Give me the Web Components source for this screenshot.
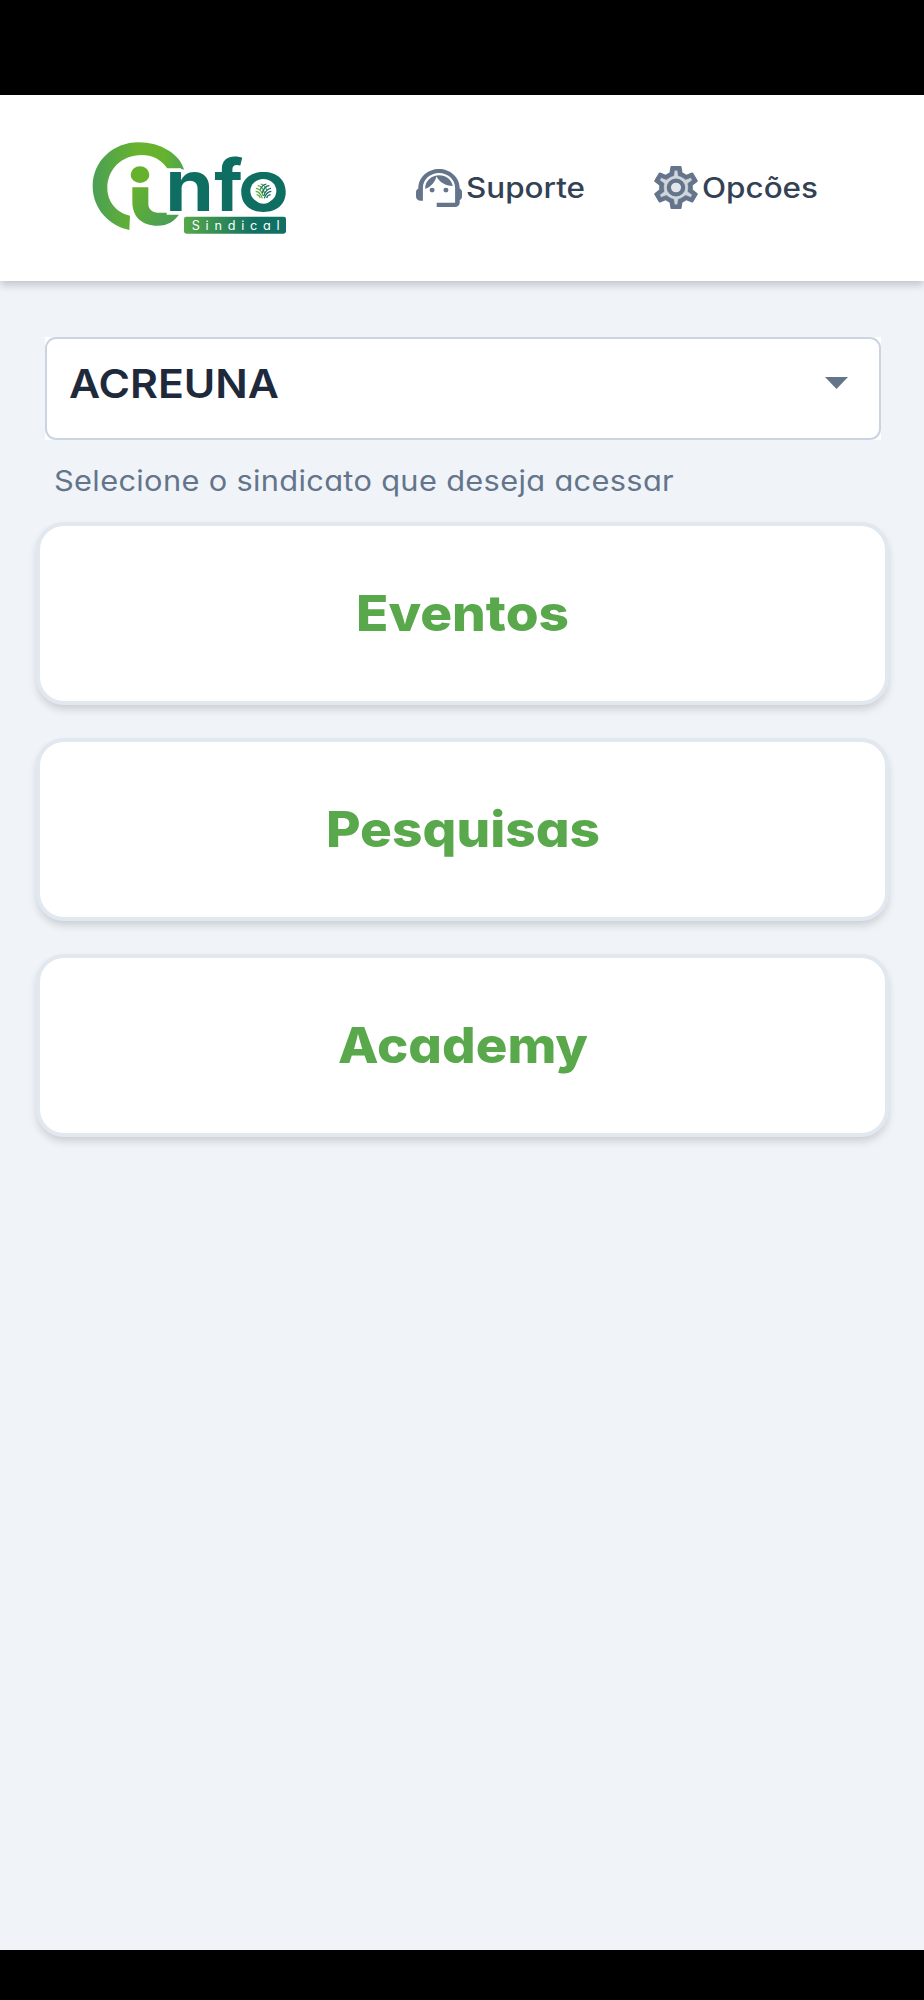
<!DOCTYPE html>
<html lang="pt-BR">
<head>
<meta charset="utf-8">
<title>Info Sindical</title>
<style>
html,body{margin:0;padding:0;background:#000}
body{font-family:Inter,"Liberation Sans",sans-serif}
</style>
</head>
<body>
<info-app></info-app>
<script>
class Base extends HTMLElement{
  connectedCallback(){
    if(this.shadowRoot)return;
    this.attachShadow({mode:'open'}).innerHTML=this.view();
    this.ready();
  }
  ready(){}
}

/* Text stretched horizontally so that its run is exactly `width` pixels. */
class WideText extends Base{
  view(){return `<style>
    :host{display:block;flex:none;white-space:nowrap;font-optical-sizing:none;font-feature-settings:"cv11","calt" 0}
    span{display:inline-block;transform-origin:0 50%}
    </style><span><slot></slot></span>`}
  ready(){
    const s=this.shadowRoot.querySelector('span');
    const w=+this.getAttribute('width');
    this.style.width=w+'px';
    s.style.transform=`scaleX(${w/s.getBoundingClientRect().width})`;
  }
}
customElements.define('wide-text',WideText);

class InfoLogo extends Base{
  view(){return `<style>
    :host{display:block;width:220px;height:115px}
    svg{display:block}
    .n{font:700 214px Inter,sans-serif;fill:#0f6e62}
    .s{font:400 38px Inter,sans-serif;fill:#fff;font-feature-settings:"cv11"}
    </style>
    <svg width="220" height="115" viewBox="0 0 660 345">
      <defs>
        <linearGradient id="c" gradientUnits="userSpaceOnUse" x1="40" y1="150" x2="310" y2="150"><stop offset="0" stop-color="#4ba054"/><stop offset=".5" stop-color="#68b32e"/><stop offset=".8" stop-color="#65b22f"/><stop offset="1" stop-color="#4fa553"/></linearGradient>
        <linearGradient id="i" gradientUnits="userSpaceOnUse" x1="155" y1="180" x2="265" y2="280"><stop offset="0" stop-color="#66b22e"/><stop offset="1" stop-color="#4a9f55"/></linearGradient>
        <linearGradient id="b" x1="0" x2="1"><stop offset="0" stop-color="#55a848"/><stop offset=".7" stop-color="#107063"/></linearGradient>
      </defs>
      <path d="M148 300C90 289 38 238 38 169C38 94 99 37 176 37C242 37 300 73 312 119C296 113 282 117 270 127L258 110C241 88 216 75 186 75C124 75 82 119 82 174C82 215 109 248 150 257Z" fill="url(#c)"/>
      <ellipse cx="180" cy="134" rx="28" ry="25" fill="#66b22e"/>
      <path d="M157 172H205V222C205 238 217 247 234 248H300C286 273 263 287 233 287C185 287 157 260 157 215Z" fill="url(#i)"/>
      <path d="M260 115H303V130Q318 116 345 116Q388 118 392 168V254H260Z" fill="#fff"/>
      <text class="n" y="242"><tspan x="256" textLength="146" lengthAdjust="spacingAndGlyphs">n</tspan><tspan x="403" textLength="86" lengthAdjust="spacingAndGlyphs">f</tspan><tspan x="474" textLength="153" lengthAdjust="spacingAndGlyphs">o</tspan></text>
      <ellipse cx="550" cy="183" rx="39" ry="36" fill="#fff"/>
      <g fill="none" stroke-width="3.6">
        <path stroke="#5aa83e" d="M527 184Q540 184 547 205M528 175Q543 176 550 198M533 167Q548 168 554 190M542 162Q555 165 560 180M530 194Q538 195 541 204"/>
        <path stroke="#0f6e62" d="M574 184Q560 184 553 205M573 175Q558 176 551 198M568 167Q553 168 547 189M559 162Q546 165 541 179M572 194Q562 195 560 204"/>
      </g>
      <rect x="312" y="260" width="306" height="51" rx="7" fill="url(#b)"/>
      <text class="s" x="335" y="299" textLength="264" lengthAdjust="spacing">Sindical</text>
    </svg>`}
}
customElements.define('info-logo',InfoLogo);

class SupportIcon extends Base{
  view(){return `<style>:host{display:block;flex:none}svg{display:block}</style>
    <svg width="46" height="38" viewBox="2 3 20 18" preserveAspectRatio="none" fill="#64748b">
      <circle cx="9" cy="13" r="1.1"/><circle cx="15" cy="13" r="1.1"/>
      <path d="M18 11.03C17.52 8.18 15.04 6 12.05 6c-3.03 0-6.29 2.51-6.03 6.45 2.47-1.01 4.33-3.21 4.86-5.89 1.31 2.63 4 4.44 7.12 4.47z"/>
      <path d="M21 12.22C21 6.73 16.74 3 12 3c-4.69 0-9 3.65-9 9.28-.6.34-1 .98-1 1.72v2c0 1.1.9 2 2 2h1v-6.1c0-3.87 3.13-7 7-7s7 3.13 7 7V19h-8v2h8c1.1 0 2-.9 2-2v-1.22c.59-.31 1-.92 1-1.64v-2.3c0-.7-.41-1.31-1-1.62z"/>
    </svg>`}
}
customElements.define('support-icon',SupportIcon);

class GearIcon extends Base{
  view(){return `<style>:host{display:block;flex:none}svg{display:block}</style>
    <svg width="44" height="43" viewBox="2.2 2 19.6 20" preserveAspectRatio="none">
      <path fill="#64748b" d="M19.43 12.98c.04-.32.07-.64.07-.98 0-.34-.03-.66-.07-.98l2.11-1.65c.19-.15.24-.42.12-.64l-2-3.46c-.09-.16-.26-.25-.44-.25-.06 0-.12.01-.17.03l-2.49 1c-.52-.4-1.08-.73-1.69-.98l-.38-2.65C14.46 2.18 14.25 2 14 2h-4c-.25 0-.46.18-.49.42l-.38 2.65c-.61.25-1.17.59-1.69.98l-2.49-1c-.06-.02-.12-.03-.18-.03-.17 0-.34.09-.43.25l-2 3.46c-.13.22-.07.49.12.64l2.11 1.65c-.04.32-.07.65-.07.98 0 .33.03.66.07.98l-2.11 1.65c-.19.15-.24.42-.12.64l2 3.46c.09.16.26.25.44.25.06 0 .12-.01.17-.03l2.49-1c.52.4 1.08.73 1.69.98l.38 2.65c.03.24.24.42.49.42h4c.25 0 .46-.18.49-.42l.38-2.65c.61-.25 1.17-.59 1.69-.98l2.49 1c.06.02.12.03.18.03.17 0 .34-.09.43-.25l2-3.46c.12-.22.07-.49-.12-.64l-2.11-1.65z"/>
      <path fill="#d0d5dc" stroke="#64748b" stroke-width=".25" d="M19.28 8.6l-.7-1.21-1.27.51-1.06.43-.91-.7c-.39-.3-.8-.54-1.23-.71l-1.06-.43-.16-1.13L12.7 4h-1.4l-.19 1.35-.16 1.13-1.06.44c-.41.17-.82.41-1.25.73l-.9.68-1.05-.42-1.27-.52-.7 1.21 1.08.84.89.7-.14 1.13c-.03.3-.05.53-.05.73s.02.43.05.73l.14 1.13-.89.7-1.08.84.7 1.21 1.27-.51 1.06-.43.91.7c.39.3.8.54 1.23.71l1.06.43.16 1.13.19 1.36h1.39l.19-1.35.16-1.13 1.06-.43c.41-.17.82-.41 1.25-.73l.9-.68 1.04.42 1.27.51.7-1.21-1.08-.84-.89-.7.14-1.13c.04-.31.05-.52.05-.73 0-.21-.02-.43-.05-.73l-.14-1.13.89-.7 1.1-.84z"/>
      <circle cx="12" cy="12" r="3.2" fill="#e2e5ea" stroke="#64748b" stroke-width="1.9"/>
    </svg>`}
}
customElements.define('gear-icon',GearIcon);

class NavAction extends Base{
  view(){return `<style>:host{display:flex;align-items:center;gap:4px;font-size:28px;line-height:40px;font-weight:500;color:#334155}</style>
    <slot name="icon"></slot><slot></slot>`}
}
customElements.define('nav-action',NavAction);

class AppHeader extends Base{
  view(){return `<style>
    :host{display:flex;align-items:flex-start;box-sizing:border-box;height:186px;background:#fff;padding:35px 0 0 80px;box-shadow:0 4px 8px rgba(0,0,0,.2);position:relative}
    nav{display:flex;gap:69px;margin:36px 0 0 115.5px}
    </style><info-logo></info-logo><nav><slot></slot></nav>`}
}
customElements.define('app-header',AppHeader);

class UnionSelect extends Base{
  view(){return `<style>
    :host{display:block}
    .back{background:#fff;margin:0 43px 0 45px}
    .box{box-sizing:border-box;height:103px;border:2px solid #cbd5e1;border-radius:11px;background:#fff;display:flex;align-items:flex-start;justify-content:space-between;padding:25px 31px 0 22px;font-size:40px;line-height:40px;font-weight:600;color:#1e293b}
    svg{display:block;margin-top:13px}
    .hint{margin:21px 0 0 54px;font-size:28px;line-height:40px;color:#64748b;letter-spacing:.3px}
    </style>
    <div class="back"><div class="box"><slot></slot><svg width="23" height="12" viewBox="0 0 23 12"><path d="M0 0H23L11.5 12Z" fill="#64748b"/></svg></div></div>
    <div class="hint"><slot name="hint"></slot></div>`}
}
customElements.define('union-select',UnionSelect);

class MenuCard extends Base{
  view(){return `<style>
    :host{display:flex;align-items:center;justify-content:center;box-sizing:border-box;height:183px;border:4px solid #e2e8f0;border-radius:28px;background:#fff;color:#5aa84c;font-size:50px;line-height:60px;font-weight:800;padding-bottom:2px;box-shadow:0 5px 9px -1px rgba(0,0,0,.16)}
    </style><slot></slot>`}
}
customElements.define('menu-card',MenuCard);

class InfoApp extends Base{
  view(){return `<style>
    :host{display:flex;flex-direction:column;box-sizing:border-box;height:2000px;padding:95px 0 50px;background:#000}
    main{flex:1;background:#f0f4f9;padding-top:56px}
    .cards{display:flex;flex-direction:column;gap:33px;margin:21px 35px 0 36px}
    </style>
    <app-header>
      <nav-action><support-icon slot="icon"></support-icon><wide-text width="119">Suporte</wide-text></nav-action>
      <nav-action><gear-icon slot="icon"></gear-icon><wide-text width="116">Opcões</wide-text></nav-action>
    </app-header>
    <main>
      <union-select><wide-text width="210">ACREUNA</wide-text><wide-text slot="hint" width="620">Selecione o sindicato que deseja acessar</wide-text></union-select>
      <div class="cards">
        <menu-card><wide-text width="213">Eventos</wide-text></menu-card>
        <menu-card><wide-text width="274">Pesquisas</wide-text></menu-card>
        <menu-card><wide-text width="250">Academy</wide-text></menu-card>
      </div>
    </main>`}
}
customElements.define('info-app',InfoApp);
</script>
</body>
</html>
